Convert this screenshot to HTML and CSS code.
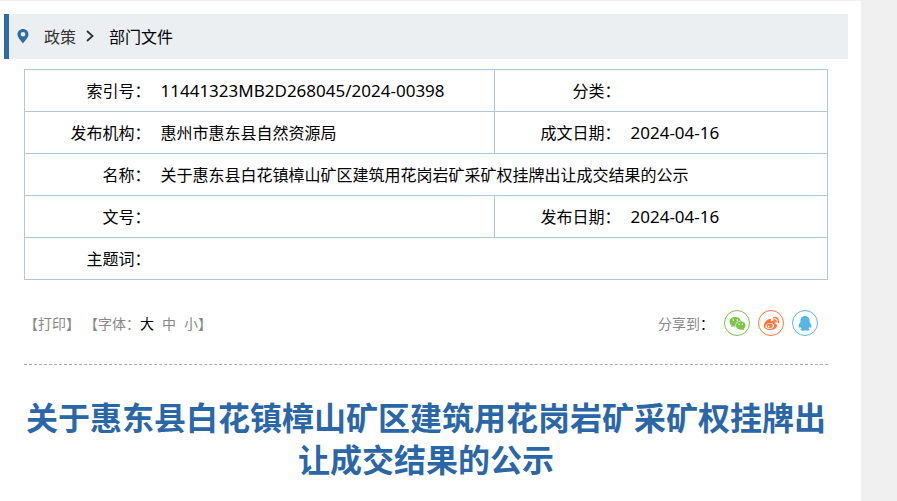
FILE: index.html
```html
<!DOCTYPE html>
<html lang="zh-CN">
<head>
  <meta charset="UTF-8">
  <meta name="viewport" content="width=device-width, initial-scale=1.0">
  <title>关于惠东县白花镇樟山矿区建筑用花岗岩矿采矿权挂牌出让成交结果的公示</title>
  <link rel="stylesheet" href="styles.css">
</head>
<body>

  <div class="page">
    <nav class="crumbs">
      <svg class="pin" viewBox="0 0 12 16" aria-hidden="true">
        <path fill="#2e6da4" fill-rule="evenodd" d="M6 1C2.900 1 .5 3.300 .5 6.300c0 3.200 3.200 6.300 5.500 9.200 2.300-2.900 5.500-6 5.500-9.200C11.500 3.300 9.100 1 6 1zm0 3a2.300 2.300 0 1 1 0 4.600A2.300 2.300 0 0 1 6 4z"/>
      </svg>
      <a href="#" class="parent">政策</a>
      <svg class="arrow" viewBox="0 0 8 12" aria-hidden="true">
        <path fill="none" stroke="#333" stroke-width="1.800" d="M1 1 6.500 6 1 11"/>
      </svg>
      <a href="#">部门文件</a>
    </nav>

    <main class="article">
      <table class="info">
        <colgroup>
          <col class="col-label"><col class="col-wide"><col class="col-label"><col>
        </colgroup>
        <tr>
          <th scope="row">索引号：</th>
          <td class="num">11441323MB2D268045/2024-00398</td>
          <th scope="row">分类：</th>
          <td></td>
        </tr>
        <tr>
          <th scope="row">发布机构：</th>
          <td>惠州市惠东县自然资源局</td>
          <th scope="row">成文日期：</th>
          <td class="num">2024-04-16</td>
        </tr>
        <tr>
          <th scope="row">名称：</th>
          <td colspan="3">关于惠东县白花镇樟山矿区建筑用花岗岩矿采矿权挂牌出让成交结果的公示</td>
        </tr>
        <tr>
          <th scope="row">文号：</th>
          <td></td>
          <th scope="row">发布日期：</th>
          <td class="num">2024-04-16</td>
        </tr>
        <tr>
          <th scope="row">主题词：</th>
          <td colspan="3"></td>
        </tr>
      </table>

      <div class="tools">
        <button type="button" id="print">【打印】</button>
        <div class="sizes">
          <span>【字体：</span>
          <button type="button" class="active">大</button>
          <button type="button">中</button>
          <span><button type="button">小</button>】</span>
        </div>
        <div class="share">
          <span class="share-label">分享到<b>：</b></span>
          <a href="#" class="wechat" aria-label="微信">
            <svg viewBox="0 0 24 24">
              <path fill="currentColor" fill-rule="evenodd" d="M10.200 6C7 6 4.500 8.100 4.500 10.800c0 1.500.8 2.800 2.100 3.700L6 16.300l2.200-1.100c.6.200 1.300.3 2 .3h.5a4.500 4.500 0 0 1-.2-1.300c0-2.500 2.400-4.500 5.300-4.500h.2C15.400 7.600 13 6 10.200 6zM8.300 8.300a.8.800 0 1 1 0 1.600.8.800 0 0 1 0-1.600zm4 0a.8.800 0 1 1 0 1.600.8.800 0 0 1 0-1.600z"/>
              <path fill="currentColor" fill-rule="evenodd" d="M15.700 10.300c-2.700 0-4.800 1.900-4.800 4.200s2.100 4.200 4.800 4.200c.6 0 1.200-.1 1.700-.3l1.800 1-.5-1.700c1.200-.8 1.800-1.900 1.800-3.200 0-2.300-2.100-4.200-4.800-4.200zm-1.600 2.200a.7.700 0 1 1 0 1.400.7.700 0 0 1 0-1.400zm3.200 0a.7.700 0 1 1 0 1.400.7.700 0 0 1 0-1.400z"/>
            </svg>
          </a>
          <a href="#" class="weibo" aria-label="微博">
            <svg viewBox="0 0 24 24">
              <path fill="currentColor" fill-rule="evenodd" d="M15.700 12.200c.4-1 .3-1.800-.2-2.200-.8-.5-2-.3-3.500.3.400-1.300.2-2.200-.5-2.400C9.600 7.300 4.700 11.400 4.700 14.700c0 2.600 2.900 4.300 6.500 4.300 4.100 0 6.900-2.200 6.900-4.200 0-1.300-.9-2.200-2.400-2.600zM10.900 17.900c-2.500.2-4.500-.9-4.600-2.500-.1-1.700 1.800-3.200 4.300-3.400 2.500-.2 4.500.9 4.600 2.500.1 1.700-1.800 3.200-4.300 3.400z"/>
              <path fill="currentColor" fill-rule="evenodd" d="M10.700 12.600c-1.900.2-3.200 1.400-3.100 2.700.1 1.300 1.600 2.100 3.300 1.900 1.700-.3 2.900-1.500 2.700-2.800-.2-1.200-1.400-1.900-2.900-1.800zm-1 2a.9.900 0 1 1 0 1.800.9.900 0 0 1 0-1.800z"/>
              <path fill="none" stroke="currentColor" stroke-width="1.500" stroke-linecap="round" d="M14.700 6.700c3.200-.7 5.500 1.900 4.600 4.900M14.900 9c1.500-.3 2.500.8 2.100 2.100"/>
            </svg>
          </a>
          <a href="#" class="qq" aria-label="QQ">
            <svg viewBox="0 0 24 24">
              <path fill="currentColor" d="M12 5C9.100 5 7.400 6.900 7.400 9.600v1.400C6.200 12.500 5.400 14 5.600 16.300c.1.800.9.600 1.700-.6.300.8.700 1.500 1.300 2.100-.9.300-1.300.8-1.100 1.300.5.900 3.200.8 4.500.1 1.300.7 4 .8 4.500-.1.200-.5-.2-1-1.100-1.300.6-.6 1-1.300 1.300-2.100.8 1.200 1.600 1.400 1.700.6.200-2.300-.6-3.800-1.800-5.300V9.600C16.600 6.900 14.900 5 12 5z"/>
            </svg>
          </a>
        </div>
      </div>

      <h1>关于惠东县白花镇樟山矿区建筑用花岗岩矿采矿权挂牌出让成交结果的公示</h1>
    </main>
  </div>

  <script>
    document.getElementById('print').addEventListener('click', function () {
      window.print();
    });
  </script>

</body>
</html>
```
FILE: styles.css
```css
* { box-sizing: border-box; }
body { margin: 0; background: #f0f0f0; color: #000; font: 16px/24px "Noto Sans CJK SC", sans-serif; }
a { color: inherit; text-decoration: none; }

.page { margin: 1px 36px 0 0; padding-top: 13px; min-height: 100vh; background: #fff; }

/* breadcrumb */
.crumbs { display: flex; align-items: center; height: 45px; margin: 0 13px 0 4px; padding: 0 0 2px 8px; border-left: 5px solid #2e6da4; background: #ebeff2; }
.pin { width: 12px; height: 16px; margin-right: 15px; }
.parent { color: #333; }
.arrow { width: 8px; height: 12px; margin: 0 15px 0 10px; }

.article { padding: 10px 33px 20px 24px; }

/* document info */
.info { width: 100%; table-layout: fixed; border-collapse: collapse; border: 1px solid #adc8e0; }
.col-label { width: 131px; }
.col-wide { width: 339px; }
.info tr { height: 42px; border-top: 1px solid #adc8e0; }
.info th { padding: 0 5px 2px 0; border-left: 1px solid #adc8e0; font-weight: normal; text-align: right; }
.info td { padding: 0 5px 2px; }
.info .num { padding-bottom: 0; font-family: "Noto Sans", sans-serif; font-size: 17px; }

/* print, font size, share */
.tools { display: flex; align-items: center; height: 85px; padding-top: 2px; border-bottom: 1px dashed #aaa; color: #888; font-size: 14px; }
.tools button { padding: 0; border: 0; background: none; color: inherit; font: inherit; cursor: pointer; }
.tools .active { color: #000; }
.sizes { display: flex; margin-left: 4px; }
.sizes .active + button { margin: 0 8px; }
.share { display: flex; align-items: center; gap: 8px; margin-left: auto; padding-right: 10px; }
.share-label { margin-right: 2px; }
.share b { color: #000; font-weight: normal; }
.share a { width: 26px; height: 26px; border: 1px solid; border-radius: 50%; }
.share svg { display: block; width: 24px; height: 24px; }
.wechat { color: #7bc549; }
.weibo { color: #ff763b; }
.qq { color: #56b6e7; }

h1 { margin: 30px 0 0; color: #2b67a7; font-size: 32px; line-height: 42px; text-align: center; }
```
